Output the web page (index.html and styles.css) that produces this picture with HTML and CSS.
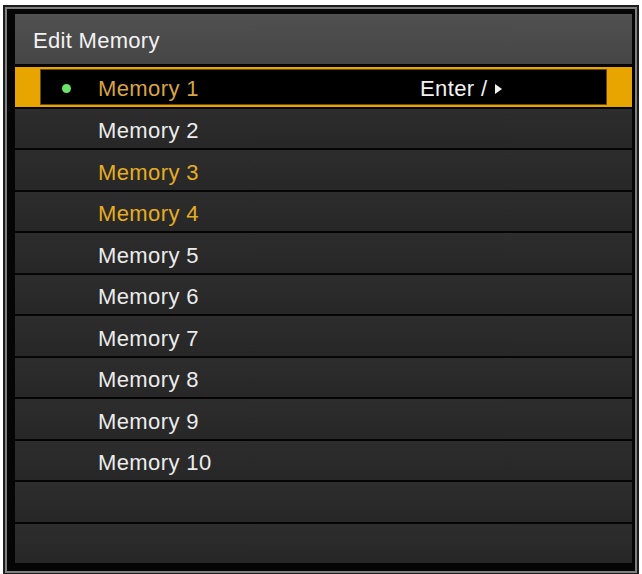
FILE: index.html
```html
<!DOCTYPE html>
<html lang="en">
<head>
    <meta charset="UTF-8">
    <meta name="viewport" content="width=device-width, initial-scale=1.0">
    <title>Edit Memory</title>
    <link rel="stylesheet" href="styles.css">
</head>
<body>
    <div class="frame">
        <div class="frame-inner">
            <div class="menu">
                <div class="menu-title">Edit Memory</div>
                <div class="row selected">
                    <div class="row-box">
                        <span class="dot"></span>
                        <span class="name">Memory 1</span>
                        <span class="action">Enter / <span class="arrow"></span></span>
                    </div>
                </div>
                <div class="row"><span class="name">Memory 2</span></div>
                <div class="row used"><span class="name">Memory 3</span></div>
                <div class="row used"><span class="name">Memory 4</span></div>
                <div class="row"><span class="name">Memory 5</span></div>
                <div class="row"><span class="name">Memory 6</span></div>
                <div class="row"><span class="name">Memory 7</span></div>
                <div class="row"><span class="name">Memory 8</span></div>
                <div class="row"><span class="name">Memory 9</span></div>
                <div class="row"><span class="name">Memory 10</span></div>
                <div class="row"></div>
                <div class="row"></div>
            </div>
        </div>
    </div>
</body>
</html>
```

FILE: styles.css
```css
body {
    margin: 0;
    padding: 5px 3px 2px 3px;
    background: #fff;
    font-family: "Liberation Sans", Arial, sans-serif;
}
.frame {
    border: 2px solid #1c1c1c;
}
.frame-inner {
    border: 2px solid #7f7f7f;
    background: #050505;
    padding: 5px 3px 8px 8px;
}
.menu {
    height: 549px;
    display: grid;
    grid-template-rows: 51px repeat(12, minmax(0, 1fr));
    gap: 2px;
}
.menu-title {
    margin-bottom: 1px;
    background: linear-gradient(#505050, #464646);
    color: #f2f2f2;
    font-size: 22px;
    letter-spacing: 0.3px;
    display: flex;
    align-items: center;
    padding: 3px 0 0 18px;
}
.row {
    background: linear-gradient(#2d2d2d, #272727);
    color: #ececec;
    font-size: 22px;
    letter-spacing: 0.4px;
    display: flex;
    align-items: center;
    padding: 6px 0 0 83px;
}
.row.used {
    color: #e6ad22;
}
.row.selected {
    background: #e8a500;
    padding: 2px 25px;
    align-items: stretch;
}
.row-box {
    flex: 1;
    background: #000;
    border: 1px solid #6a4a12;
    display: flex;
    align-items: center;
    padding: 4px 0 0 21px;
}
.row-box .name {
    color: #d9a441;
    width: 322px;
}
.dot {
    width: 9px;
    height: 9px;
    border-radius: 50%;
    background: #6ae56a;
    margin-right: 27px;
}
.action {
    color: #f2f2f2;
    display: flex;
    align-items: center;
}
.arrow {
    width: 0;
    height: 0;
    border-top: 5px solid transparent;
    border-bottom: 5px solid transparent;
    border-left: 7px solid #f2f2f2;
    margin-left: 7px;
}
```
